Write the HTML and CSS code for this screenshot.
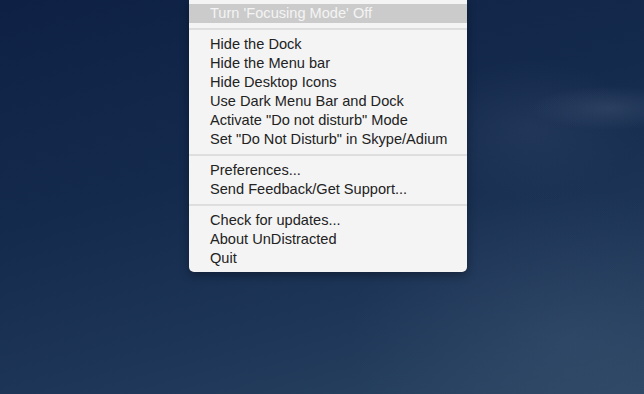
FILE: index.html
```html
<!DOCTYPE html>
<html lang="en">
<head>
  <meta charset="UTF-8" />
  <title>UnDistracted</title>
  <link rel="stylesheet" href="styles.css">
</head>
<body>
  <div class="desktop">
    <!-- status bar menu -->
    <div class="menu">
      <div class="item hl">Turn 'Focusing Mode' Off</div>
      <div class="sep"></div>
      <div class="item">Hide the Dock</div>
      <div class="item">Hide the Menu bar</div>
      <div class="item">Hide Desktop Icons</div>
      <div class="item">Use Dark Menu Bar and Dock</div>
      <div class="item">Activate "Do not disturb" Mode</div>
      <div class="item">Set "Do Not Disturb" in Skype/Adium</div>
      <div class="sep"></div>
      <div class="item">Preferences...</div>
      <div class="item">Send Feedback/Get Support...</div>
      <div class="sep"></div>
      <div class="item">Check for updates...</div>
      <div class="item">About UnDistracted</div>
      <div class="item">Quit</div>
    </div>
  </div>
</body>
</html>
```

FILE: styles.css
```css
*{box-sizing:border-box;margin:0;padding:0}
body{width:644px;height:394px;overflow:hidden;font-family:"Helvetica Neue","Liberation Sans",Arial,sans-serif}
.desktop{width:100%;height:100%;padding-left:189px;
  background:
    radial-gradient(ellipse 80px 22px at 610px 108px,rgba(110,125,150,.22),transparent),
    radial-gradient(ellipse 110px 70px at 530px 130px,rgba(80,95,125,.18),transparent),
    radial-gradient(ellipse 220px 150px at 570px 340px,rgba(70,90,120,.3),transparent),
    linear-gradient(165deg,#0e2144 0%,#142a4d 40%,#1d3557 70%,#2b4663 100%)}
/* menu */
.menu{width:278px;background:#f4f4f4;padding:4px 0 4px;border-radius:0 0 5px 5px;box-shadow:0 3px 10px rgba(0,0,0,.35);color:#222}
.item{height:19px;line-height:19px;padding-left:21px;font-size:14.6px;white-space:nowrap}
.item.hl{background:#cbcbcb;color:#f4f4f4}
.sep{height:12px;display:flex;align-items:center}
.sep::before{content:"";flex:1;height:2px;background:#dedede}
```
